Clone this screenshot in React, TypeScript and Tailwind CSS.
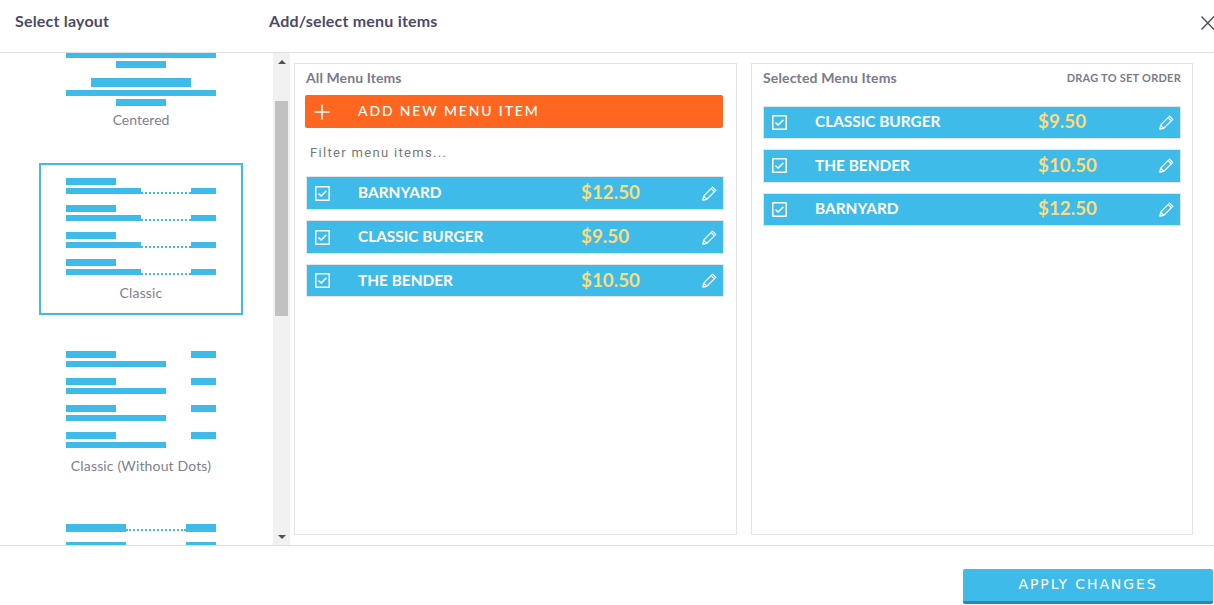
const sans = "font-['Lato','Liberation_Sans',sans-serif]";

function Check() {
  return (
    <svg width="15" height="15" viewBox="0 0 15 15" fill="none" className="shrink-0">
      <rect x="0.75" y="0.75" width="13.5" height="13.5" rx="0.5" stroke="#fff" strokeWidth="1.5" />
      <path d="M3.5 7.6 L6.2 10 L11.3 4.9" stroke="#fff" strokeWidth="1.5" />
    </svg>
  );
}

function PencilIcon() {
  return (
    <svg width="15" height="15" viewBox="0 0 15 15" fill="none" className="shrink-0">
      <path d="M0.8 14.2 L1.7 10.2 L10.6 1.2 L13.8 4.4 L4.8 13.3 Z M9.3 2.6 L12.4 5.8 M1.7 10.2 L4.8 13.3" stroke="#fff" strokeWidth="1.2" strokeLinejoin="round" />
    </svg>
  );
}

function MenuRow({ name, price, className }: { name: string; price: string; className: string }) {
  return (
    <div className={`flex items-center shrink-0 w-[418px] pl-2 bg-[#3fbbe9] border border-[#e3e6e8] ${className}`}>
      <Check />
      <div className="ml-7 w-[223px] text-[15.4px] leading-5 pb-[2px] font-bold text-white whitespace-nowrap">{name}</div>
      <div className="w-[121px] text-[18.8px] leading-6 pb-[2px] font-bold text-[#fbdc7c] whitespace-nowrap">{price}</div>
      <PencilIcon />
    </div>
  );
}

function ClassicRow({ dots }: { dots: boolean }) {
  return (
    <div className="w-[150px] mb-[11px] shrink-0">
      <div className="flex justify-between">
        <div className="w-[50px] h-[7px] bg-[#3fbbe9]" />
        {!dots && <div className="w-[25px] h-[7px] bg-[#3fbbe9]" />}
      </div>
      {dots ? (
        <div className="flex mt-[3px] h-[6px]">
          <div className="w-[75px] bg-[#3fbbe9]" />
          <div className="w-[50px] border-b-2 border-dotted border-[#3fbbe9]" />
          <div className="w-[25px] bg-[#3fbbe9]" />
        </div>
      ) : (
        <div className="mt-[3px] w-[100px] h-[6px] bg-[#3fbbe9]" />
      )}
    </div>
  );
}

function ClassicCard({ dots, label, selected }: { dots: boolean; label: string; selected: boolean }) {
  return (
    <div
      className={`shrink-0 ml-[39px] mt-[21px] w-[204px] h-[152px] border-2 pt-[13px] flex flex-col items-center ${
        selected ? "border-[#3fbbe9]" : "border-transparent"
      }`}
    >
      <ClassicRow dots={dots} />
      <ClassicRow dots={dots} />
      <ClassicRow dots={dots} />
      <ClassicRow dots={dots} />
      <div className="-mt-[3px] text-[14px] tracking-[0.15px] leading-5 text-[#7f7e90] whitespace-nowrap">{label}</div>
    </div>
  );
}

function Sidebar() {
  return (
    <div className="w-[273px] shrink-0 h-full overflow-hidden flex flex-col">
      <div className="shrink-0 ml-[41px] w-[200px] h-[89px] flex flex-col items-center">
        <div className="w-[150px] h-[5px] bg-[#3fbbe9]" />
        <div className="mt-[3px] w-[50px] h-[7px] bg-[#3fbbe9]" />
        <div className="mt-[10px] w-[100px] h-[9px] bg-[#3fbbe9]" />
        <div className="mt-[3px] w-[150px] h-[6px] bg-[#3fbbe9]" />
        <div className="mt-[3px] w-[50px] h-[7px] bg-[#3fbbe9]" />
        <div className="mt-1 text-[14px] leading-5 text-[#7f7e90]">Centered</div>
      </div>
      <ClassicCard dots label="Classic" selected />
      <ClassicCard dots={false} label="Classic (Without Dots)" selected={false} />
      <div className="shrink-0 ml-[66px] mt-[36px] w-[150px]">
        <div className="flex h-[8px]">
          <div className="w-[60px] bg-[#3fbbe9]" />
          <div className="w-[60px] border-b-2 border-dotted border-[#3fbbe9] -translate-y-px" />
          <div className="w-[30px] bg-[#3fbbe9]" />
        </div>
        <div className="flex justify-between mt-[10px]">
          <div className="w-[60px] h-[8px] bg-[#3fbbe9]" />
          <div className="w-[30px] h-[8px] bg-[#3fbbe9]" />
        </div>
      </div>
    </div>
  );
}

function Scrollbar() {
  return (
    <div className="w-[17px] shrink-0 h-full bg-[#f1f1f1] flex flex-col items-center justify-between relative">
      <div className="h-[48px] w-full flex justify-center pt-[7px] shrink-0">
        <div className="w-0 h-0 border-x-[4px] border-x-transparent border-b-[4px] border-b-[#505050]" />
      </div>
      <div className="absolute top-[48px] left-[2px] w-[13px] h-[215px] bg-[#c1c1c1]" />
      <div className="w-full flex justify-center pb-[6px]">
        <div className="w-0 h-0 border-x-[4px] border-x-transparent border-t-[4px] border-t-[#505050]" />
      </div>
    </div>
  );
}

export default function App() {
  return (
    <div className={`w-[1214px] h-[605px] overflow-hidden bg-white flex flex-col ${sans}`}>
      <header className="h-[53px] shrink-0 border-b border-[#e0e0e3] flex items-start pt-[11px] relative">
        <div className="ml-[15px] w-[254px] text-[16px] tracking-[0.2px] leading-5 font-bold text-[#4b4a68]">Select layout</div>
        <div className="text-[16px] tracking-[0.2px] leading-5 font-bold text-[#4b4a68]">Add/select menu items</div>
        <svg width="13" height="14" viewBox="0 0 13 14" className="absolute left-[1201px] top-[16px]" fill="none">
          <path d="M0.5 0.5 L13 13.5 M13 0.5 L0.5 13.5" stroke="#4b4a68" strokeWidth="1.4" />
        </svg>
      </header>

      <main className="h-[492px] shrink-0 flex">
        <Sidebar />
        <Scrollbar />
        <div className="flex gap-[14px] pl-1 pt-[10px]">
          <section className="w-[443px] h-[472px] border border-[#e4e4e6] pt-1 flex flex-col items-start pl-[10px]">
            <div className="ml-px h-5 text-[14px] tracking-[0.1px] leading-5 font-bold text-[#7b7a8e]">All Menu Items</div>
            <button className="mt-[7px] w-[418px] h-[33px] shrink-0 rounded-[2px] bg-[#ff6620] flex items-center pl-[9px] text-white">
              <svg width="16" height="16" viewBox="0 0 16 16" fill="none" className="shrink-0">
                <path d="M8 0.5 V15.5 M0.5 8 H15.5" stroke="#fff" strokeWidth="1.5" />
              </svg>
              <span className="ml-[28px] pb-[2px] text-[14px] leading-5 tracking-[1.85px] font-medium whitespace-nowrap">ADD NEW MENU ITEM</span>
            </button>
            <input
              placeholder="Filter menu items..."
              className="mt-[7px] ml-[5px] h-[34px] w-[400px] shrink-0 outline-none text-[13px] tracking-[1.32px] font-['Roboto',sans-serif] placeholder:text-[#777777]"
            />
            <div className="mt-[7px] ml-px flex flex-col gap-[10px]">
              <MenuRow name="BARNYARD" price="$12.50" className="h-[34px]" />
              <MenuRow name="CLASSIC BURGER" price="$9.50" className="h-[34px]" />
              <MenuRow name="THE BENDER" price="$10.50" className="h-[33px]" />
            </div>
          </section>

          <section className="w-[442px] h-[472px] border border-[#e4e4e6] pt-1 pl-[11px] pr-[11px] flex flex-col">
            <div className="h-5 flex justify-between items-center">
              <div className="text-[14px] tracking-[0.15px] leading-5 font-bold text-[#7b7a8e]">Selected Menu Items</div>
              <div className="text-[11px] tracking-[0.25px] font-bold text-[#7b7a8e] whitespace-nowrap">DRAG TO SET ORDER</div>
            </div>
            <div className="mt-[17.5px] flex flex-col gap-[10px]">
              <MenuRow name="CLASSIC BURGER" price="$9.50" className="h-[33.5px]" />
              <MenuRow name="THE BENDER" price="$10.50" className="h-[33.5px]" />
              <MenuRow name="BARNYARD" price="$12.50" className="h-[33.5px]" />
            </div>
          </section>
        </div>
      </main>

      <footer className="flex-1 border-t border-[#e0e0e3] flex justify-end pr-px pt-[23px]">
        <button className="w-[250px] h-[35px] rounded-[2px] bg-[#3fbbe9] border-b-[3px] border-[#2e86a8] pb-[2px] text-white text-[14px] leading-5 tracking-[1.9px] font-['DejaVu_Sans',sans-serif]">
          APPLY CHANGES
        </button>
      </footer>
    </div>
  );
}
